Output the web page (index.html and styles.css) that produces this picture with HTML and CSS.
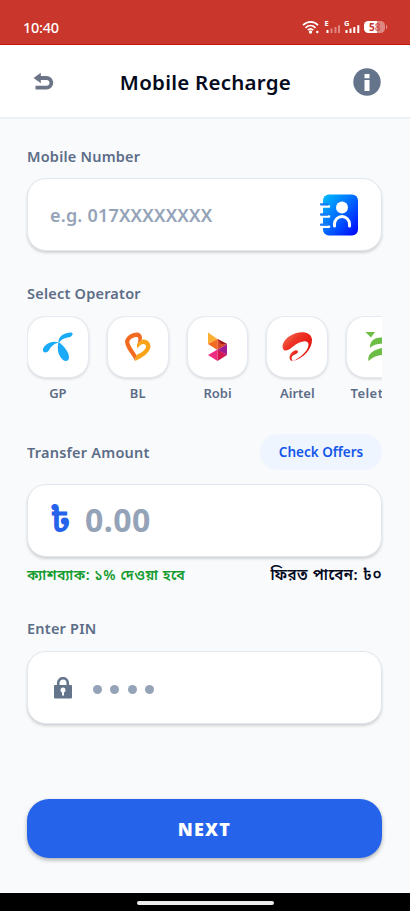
FILE: index.html
```html
<!DOCTYPE html>
<html lang="en">
<head>
<meta charset="utf-8">
<meta name="viewport" content="width=device-width, initial-scale=1">
<title>Mobile Recharge</title>
<link rel="stylesheet" href="styles.css">
</head>
<body>
<div class="status">
  <span class="clock">10:40</span>
  <svg class="indicators" width="86" height="18" viewBox="0 0 86 18" fill="#fff">
    <g fill="none" stroke="#fff" stroke-width="1.7">
      <path d="M1 7.2C5.5 2.7 12 2.7 16 7.2"/>
      <path d="M3.5 9.8C6.5 6.8 10.500 6.800 13.500 9.800"/>
      <path d="M5.800 12.200C7.500 10.600 9.500 10.600 11.200 12.200"/>
    </g>
    <circle cx="8.500" cy="14" r="1.700"/><circle cx="15.300" cy="14" r="1.200"/>
    <text class="net" x="22.500" y="8">E</text>
    <path d="M24.500 12h2v3h-2z"/>
    <path opacity=".4" d="M28.500 10.500h2V15h-2zM32.500 9h2v6h-2zM36 7.200h2V15h-2z"/>
    <text class="net" x="42" y="8">G</text>
    <path d="M43.500 12h2v3h-2zM47.500 10.500h2V15h-2zM51.300 9h2v6h-2zM55.300 7.200h2V15h-2z"/>
    <rect x="62" y="3" width="21" height="12" rx="4.500" opacity=".4"/>
    <path d="M75 3h-8.500A4.500 4.500 0 0 0 62 7.500v3A4.500 4.500 0 0 0 66.500 15H75z"/>
    <path opacity=".4" d="M84 6.500a3 3 0 0 1 0 5z"/>
    <text class="charge" x="67" y="12.700">5<tspan opacity=".65">8</tspan></text>
  </svg>
</div>
<header class="header">
  <svg class="back" width="22" height="20" viewBox="0 0 22 20"><path d="M6 6H13.500a4.800 4.800 0 0 1 0 9.700H2.500" fill="none" stroke="#6b7587" stroke-width="3.800"/><path d="M.6 6L7.800.8v10.400z" fill="#6b7587"/></svg>
  <h1 class="title">Mobile Recharge</h1>
  <svg class="info" width="28" height="28" viewBox="0 0 28 28"><circle cx="14" cy="14" r="13.700" fill="#64748b"/><path fill="#fff" d="M11.500 6h5v4.300h-5zM11.500 12h5v11h-5z"/></svg>
</header>
<main class="main">
  <label class="label">Mobile Number</label>
  <div class="field">
    <span class="placeholder">e.g. 017XXXXXXXX</span>
    <svg class="contacts" width="40" height="42" viewBox="0 0 40 42">
      <defs><linearGradient id="book" x1="0" y1="0" x2="1" y2="1"><stop offset="0" stop-color="#00bfff"/><stop offset=".5" stop-color="#0066ff"/><stop offset="1" stop-color="#0000ff"/></linearGradient></defs>
      <rect x="3" y=".5" width="35" height="41" rx="6" fill="url(#book)"/>
      <path d="M2 12.500h7M2 22.500h7M2 32.700h7" stroke="#fff" stroke-width="2.600" stroke-linecap="round"/>
      <path d="M1 10.400h6.500M1 20.500h6.500M1 30.700h6.500" stroke="#147cf5" stroke-width="2.300" stroke-linecap="round"/>
      <circle cx="22" cy="13.500" r="6" fill="#fff"/>
      <path d="M14.500 32v-2a7.500 7.500 0 0 1 15 0v2" fill="none" stroke="#fff" stroke-width="3" stroke-linecap="round"/>
    </svg>
  </div>

  <div class="label label-operator">Select Operator</div>
  <div class="operators">
    <div class="operator"><div class="tile">
      <svg width="32" height="32" viewBox="0 0 32 32" fill="#1baaf7"><path d="M16.500 11.500C16 5 23 1.500 29 1.500c3 .5 1.500 4-2 4.800-3 .7-7 1.200-9.700 5.200z"/><path d="M17 11.500C9 8.500 2 14 1 18c-.7 4.500 4 4.300 6 1.200C9.500 15 12 12.500 17 11.500z"/><path d="M16.500 11c-1.500 6-1 13 4.500 18 3 2 6 .8 6-2.500C27 21 22 15 16.500 11z"/></svg>
    </div><span>GP</span></div>
    <div class="operator"><div class="tile">
      <svg width="32" height="32" viewBox="0 0 32 32"><path fill-rule="evenodd" fill="#f36b20" d="M13 30C10.500 23.500 3.500 18 3 10.500 3.500 5 11 1 15.500 1.500c3.500.5 5.500 4 4 7.500l-4 4c1-3.500 1.500-6.500-.5-7C12 5.500 7.500 8 7.300 11c.5 4 4.700 8.500 7 13z"/><path fill-rule="evenodd" fill="#faa31b" d="M13 30l1.300-6c4.200-1.500 8.700-4.500 9.700-8 .3-3-3-4-5.500-2L15 17.500V13l4.500-4C24 7.500 28.500 10.500 28.500 16 27.500 22 20 27 13 30z"/></svg>
    </div><span>BL</span></div>
    <div class="operator"><div class="tile">
      <svg width="32" height="32" viewBox="0 0 32 32"><path d="M7 1.500l9.500 6.500L7 13z" fill="#fbb034"/><path d="M7 13l9.500-5v11z" fill="#f36b21"/><path d="M16.500 8l9.500 5-9.500 6z" fill="#d9482a"/><path d="M16.500 8l9.500 5h-6z" fill="#a01c1d"/><path d="M26 13v11l-9.500-5z" fill="#a21c91"/><path d="M16.500 18.500V30L7 24z" fill="#ef2c84"/><path d="M16.500 18.500L26 24l-9.500 6z" fill="#d31852"/></svg>
    </div><span>Robi</span></div>
    <div class="operator"><div class="tile">
      <svg width="32" height="32" viewBox="0 0 32 32"><defs><linearGradient id="air" x1="0" y1="0" x2="1" y2="1"><stop offset="0" stop-color="#f47c64"/><stop offset=".35" stop-color="#ed3325"/><stop offset="1" stop-color="#dc0000"/></linearGradient></defs><path d="M3.500 19.500C-1 16 3 9 8 5.500 17-.5 30-.5 31 8.500c.3 9-8 18.500-19 21.500 7-3 15.500-10 15.500-16.500C27 7.500 17.500 11 12 15.500c-3 2.800-6 4.300-8.500 4z" fill="url(#air)"/><path d="M12 30.200c-5-.7-4-6.200-.8-9.200 3-2.700 6.300-2 5.700 0-.7 3-5 1.800-6.200 5.500-.2 1.500.2 2.700 1.300 3.700z" fill="url(#air)"/></svg>
    </div><span>Airtel</span></div>
    <div class="operator operator-wide"><div class="tile">
      <svg width="32" height="32" viewBox="0 0 32 32" fill="#6cbd45"><path d="M4.500 1h9.500L10 6.500z"/><path d="M9 17C8.500 9.500 14 6.500 20 6.500l7-2-1 8c-6 .5-12-.5-17 4.500z"/><path d="M7.500 30C6 23 13 17.500 25 16.500v7C18 24.500 14 24 7.500 30z"/></svg>
    </div><span>Teletalk</span></div>
  </div>

  <div class="amount-head">
    <span class="label">Transfer Amount</span>
    <button class="offers">Check Offers</button>
  </div>
  <div class="field">
    <span class="taka">৳</span><span class="amount">0.00</span>
  </div>
  <div class="cashback"><span class="rate">ক্যাশব্যাক: ১% দেওয়া হবে</span><span class="return">ফিরত পাবেন: ৳০</span></div>

  <label class="label label-pin">Enter PIN</label>
  <div class="field pin-field">
    <svg class="lock" width="20" height="22" viewBox="0 0 20 22"><path d="M5.200 9V6a4.800 4.800 0 0 1 9.600 0v3" fill="none" stroke="#64748b" stroke-width="2.600"/><rect x="1" y="8" width="18" height="13.500" rx="1" fill="#64748b"/><circle cx="10" cy="13" r="2.500" fill="#fff"/><path d="M9 13h2v5.500H9z" fill="#fff"/></svg>
    <div class="dots"><i></i><i></i><i></i><i></i></div>
  </div>
  <button class="next">NEXT</button>
</main>
<div class="navbar"><div class="handle"></div></div>
</body>
</html>
```
FILE: styles.css
```css
* { box-sizing: border-box; }
body {
  margin: 0;
  height: 911px;
  display: flex;
  flex-direction: column;
  overflow: hidden;
  background: #f9fafc;
  color: #050b1e;
  font-family: "Noto Sans", "Noto Sans Bengali", sans-serif;
}
button { border: 0; font-family: inherit; }
.status {
  height: 45px;
  flex: none;
  display: flex;
  justify-content: space-between;
  padding: 17px 22px 0 23px;
  background: #c9362c;
  border-bottom: 1px solid #c51409;
  color: #fff;
}
.clock { font: 500 14.5px/20px "Noto Sans", sans-serif; letter-spacing: -0.3px; }
.indicators { margin-top: 1px; }
.net { font: 700 7.5px "Noto Sans", sans-serif; }
.charge { font: 700 10px "Noto Sans", sans-serif; fill: #c9362c; }
.header {
  height: 74px;
  flex: none;
  display: flex;
  align-items: center;
  justify-content: space-between;
  padding: 2px 29px 0 33px;
  background: #fff;
  border-bottom: 2px solid #edf1f6;
}
.title { margin: 0; font-size: 20.5px; line-height: 28px; font-weight: 600; letter-spacing: 0.25px; }
.back { margin-right: 3px; }
.main { flex: 1; padding: 27px 28px 0 27px; display: flex; flex-direction: column; }
.label { display: block; color: #5c6d87; font-size: 14.5px; line-height: 20px; font-weight: 600; letter-spacing: 0.22px; }
.field {
  height: 73px;
  flex: none;
  margin-top: 12px;
  display: flex;
  align-items: center;
  padding: 0 22px;
  border: 1px solid #e1e7ef;
  border-radius: 19px;
  background: #fff;
  box-shadow: 0 2px 3px rgba(0, 0, 0, 0.16);
}
.placeholder { color: #94a3b8; font-size: 18px; font-weight: 600; letter-spacing: 0.2px; }
.contacts { margin-left: auto; margin-right: -1px; }
.label-operator { margin-top: 32px; }
.operators { display: flex; gap: 18px; height: 94px; margin-top: 13px; overflow: hidden; flex: none; }
.operator {
  width: 61.800px;
  flex: none;
  display: flex;
  flex-direction: column;
  align-items: center;
  color: #5c6d87;
  font-size: 13px;
  line-height: 18px;
  font-weight: 600;
}
.operator-wide { font-size: 13px; letter-spacing: 0.45px; }
.tile {
  width: 100%;
  height: 62px;
  margin-bottom: 6px;
  display: flex;
  align-items: center;
  justify-content: center;
  border: 1px solid #e5eaf2;
  border-radius: 19px;
  background: #fff;
  box-shadow: 0 1px 3px rgba(0, 0, 0, 0.15);
}
.amount-head { height: 36px; margin-top: 24px; display: flex; align-items: center; justify-content: space-between; }
.offers {
  width: 122px;
  height: 36px;
  padding: 0;
  border-radius: 18px;
  background: #eef5ff;
  color: #1457e8;
  font-size: 13.5px;
  font-weight: 600;
}
.amount-head + .field { margin-top: 14px; }
.taka { width: 35px; margin-top: -4px; color: #2563eb; font-size: 34px; line-height: 40px; font-weight: 700; }
.amount { margin-top: -2px; color: #94a3b8; font-size: 32px; font-weight: 700; letter-spacing: 0.5px; }
.cashback { height: 22px; margin-top: 7px; display: flex; align-items: center; justify-content: space-between; font-weight: 600; white-space: nowrap; }
.rate { color: #149c2f; font-size: 14px; letter-spacing: 0.58px; }
.return { font-size: 15px; letter-spacing: 0.58px; }
.label-pin { margin-top: 32px; }
.pin-field { margin-top: 13px; padding-left: 25px; }
.dots { display: flex; gap: 8.5px; margin: 3px 0 0 19.500px; }
.dots i { width: 9px; height: 9px; border-radius: 50%; background: #94a3b8; }
.next {
  height: 59px;
  flex: none;
  margin-top: 75px;
  border-radius: 22px;
  background: #2563eb;
  color: #fff;
  font-size: 18px;
  font-weight: 900;
  letter-spacing: 1.2px;
  box-shadow: 0 2px 4px rgba(0, 0, 0, 0.3);
}
.navbar { height: 18px; flex: none; display: flex; align-items: center; justify-content: center; background: #000; }
.handle { width: 137px; height: 4px; margin-top: 1px; border-radius: 2px; background: #ececec; }
```
